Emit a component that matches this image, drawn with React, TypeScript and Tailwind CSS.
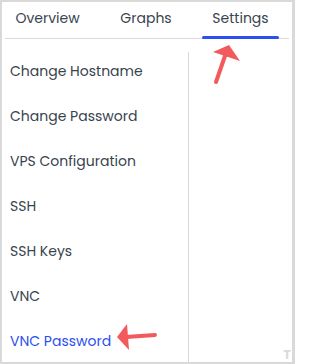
const items = [
  "Change Hostname",
  "Change Password",
  "VPS Configuration",
  "SSH",
  "SSH Keys",
  "VNC",
  "VNC Password",
]

export default function App() {
  return (
    <div
      className="relative w-[295px] h-[364px] bg-white border-2 border-r-[3px] border-[#d9d9d9] overflow-hidden text-[#38444f]"
      style={{ fontFamily: "Poppins, 'Open Sans', sans-serif" }}
    >
      <div className="mx-[3px] flex gap-[20px] border-b border-[#ded8de] h-[37px]">
        <div className="px-[10px] w-[85px] flex justify-center pt-[6px] text-[14px]">Overview</div>
        <div className="px-[10px] w-[72px] flex justify-center pt-[6px] text-[14px]">Graphs</div>
        <div className="relative px-[10px] w-[77px] flex justify-center pt-[6px] text-[14px]">
          Settings
          <span className="absolute left-0 right-0 -bottom-[1px] h-[3px] rounded-full bg-[#2c4ff2]" />
        </div>
      </div>

      <div className="flex h-[325px]">
        <div className="w-[186px] pt-[10px] pl-[8px] flex flex-col">
          {items.map((item, i) => (
            <div
              key={i}
              className={
                i === items.length - 1
                  ? "h-[45px] flex items-center text-[14px] text-[#2c4ff2]"
                  : "h-[45px] flex items-center text-[14px]"
              }
            >
              {item}
            </div>
          ))}
        </div>
        <div className="mt-[13px] w-px bg-[#dcd6da]" />
      </div>

      {/* annotation arrows */}
      <svg className="absolute left-0 top-0" width="295" height="364" viewBox="2 2 295 364">
        <line x1="216" y1="82" x2="226" y2="53" stroke="#f25a5c" strokeWidth="4" strokeLinecap="round" />
        <polygon points="229,45 213,52 240,61" fill="#f25a5c" />
        <line x1="155" y1="335" x2="126" y2="337" stroke="#f25a5c" strokeWidth="4" strokeLinecap="round" />
        <polygon points="117,337 127,324 129,350" fill="#f25a5c" />
      </svg>

      <div className="absolute right-[1px] bottom-[1px] text-[13px] font-bold text-[#dcdcdc] leading-none">T</div>
    </div>
  )
}
